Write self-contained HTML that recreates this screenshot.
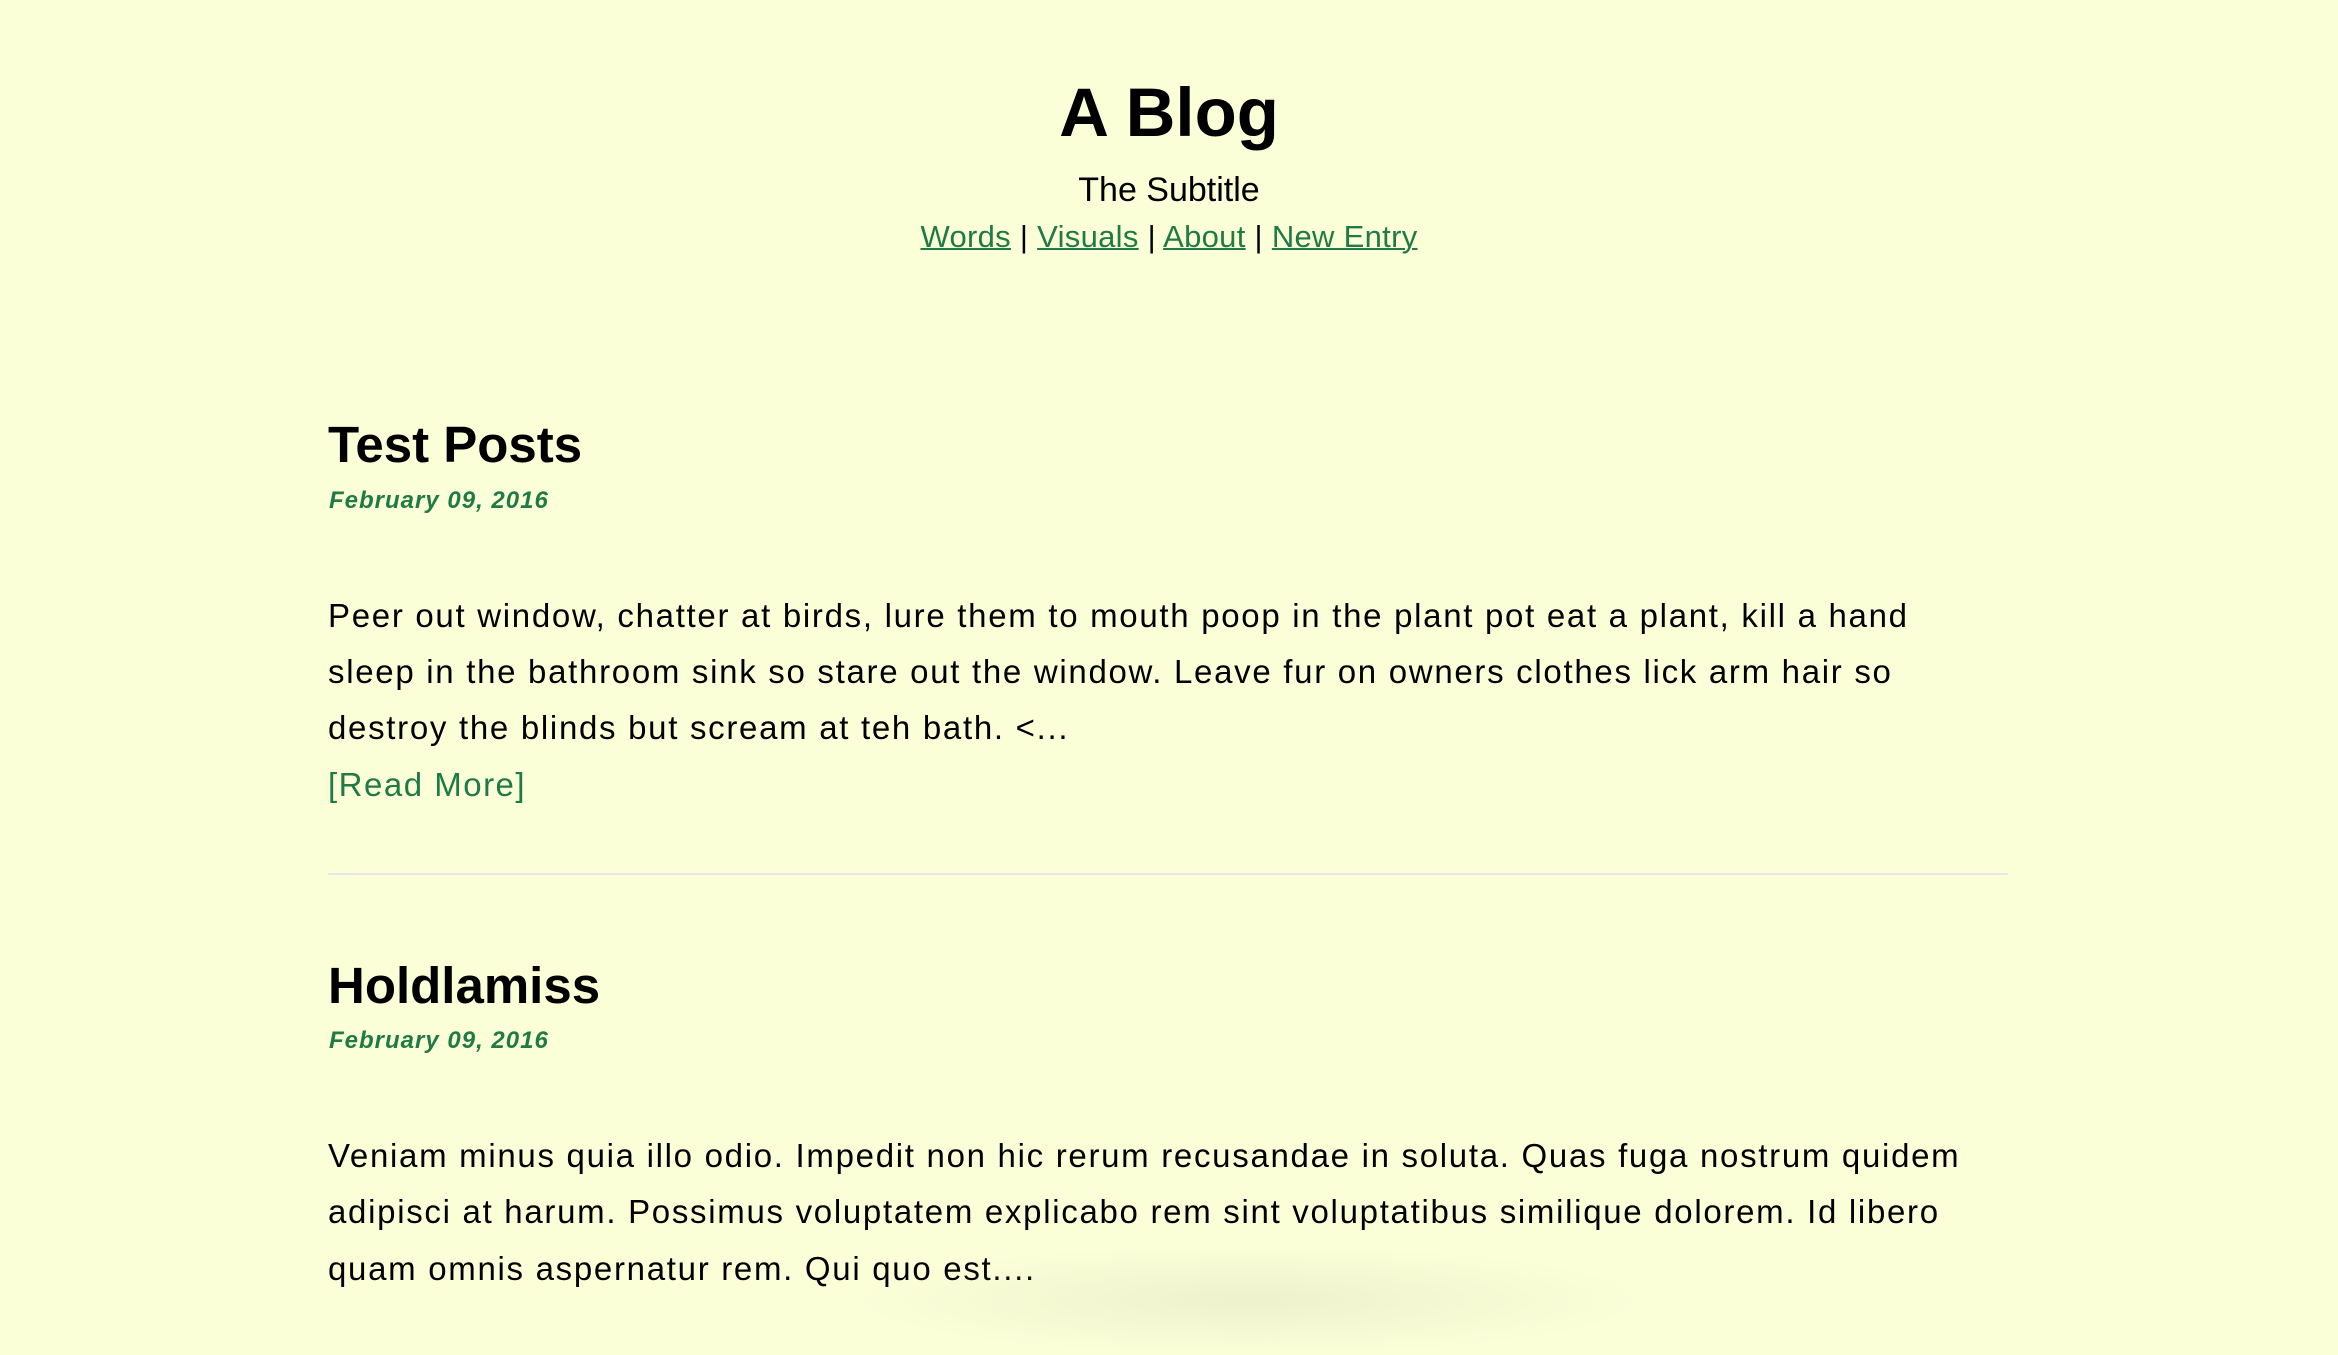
<!DOCTYPE html>
<html><head><meta charset="utf-8"><style>
html,body{margin:0;padding:0;}
body{width:2338px;height:1290px;background:#fbffd8;position:relative;overflow:hidden;font-family:"Liberation Sans",sans-serif;color:#000;}
.a{position:absolute;white-space:nowrap;line-height:1;}
.c{left:0;width:2338px;text-align:center;}
a{color:#217a45;text-decoration:underline;text-decoration-thickness:2px;}
.g{color:#217a45;}
.h{font-weight:bold;font-size:51px;left:328px;}
.d{font-style:italic;font-weight:bold;font-size:24px;left:329px;color:#217a45;letter-spacing:1px;}
.p{font-size:33px;left:328px;letter-spacing:1.7px;}
</style></head><body>
<div class="a c" style="top:78px;font-size:69px;font-weight:bold;">A Blog</div>
<div class="a c" style="top:173px;font-size:34px;">The Subtitle</div>
<div class="a c" style="top:221px;font-size:31px;letter-spacing:0.3px;"><a>Words</a> | <a>Visuals</a> | <a>About</a> | <a>New Entry</a></div>

<div class="a h" style="top:419px;">Test Posts</div>
<div class="a d" style="top:489px;">February 09, 2016</div>
<div class="a p" style="top:599px;">Peer out window, chatter at birds, lure them to mouth poop in the plant pot eat a plant, kill a hand</div>
<div class="a p" style="top:655px;">sleep in the bathroom sink so stare out the window. Leave fur on owners clothes lick arm hair so</div>
<div class="a p" style="top:711px;">destroy the blinds but scream at teh bath. &lt;...</div>
<div class="a g" style="top:768px;left:328px;font-size:33px;letter-spacing:1.5px;">[Read More]</div>

<div style="position:absolute;left:328px;top:873px;width:1680px;height:2px;background:#e6e6e8;"></div>

<div class="a h" style="top:960px;">Holdlamiss</div>
<div class="a d" style="top:1029px;">February 09, 2016</div>
<div class="a p" style="top:1139px;">Veniam minus quia illo odio. Impedit non hic rerum recusandae in soluta. Quas fuga nostrum quidem</div>
<div class="a p" style="top:1195px;">adipisci at harum. Possimus voluptatem explicabo rem sint voluptatibus similique dolorem. Id libero</div>
<div class="a p" style="top:1252px;">quam omnis aspernatur rem. Qui quo est....</div>
<div style="position:absolute;left:850px;top:1245px;width:800px;height:110px;background:radial-gradient(ellipse at center,rgba(200,205,170,0.25),rgba(200,205,170,0) 70%);"></div>
</body></html>
